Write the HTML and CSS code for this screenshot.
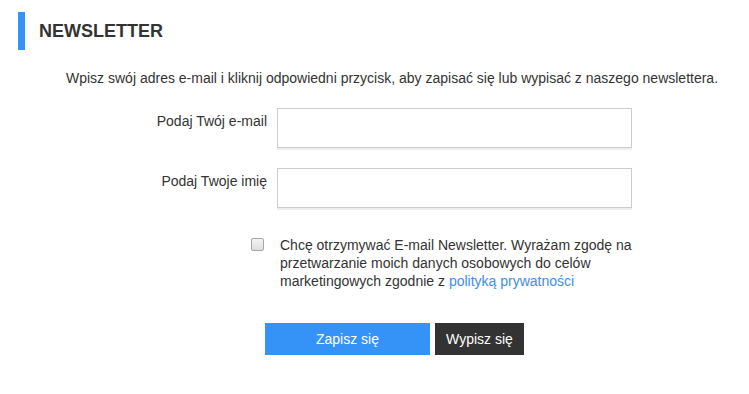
FILE: index.html
```html
<!DOCTYPE html>
<html lang="pl">
<head>
    <meta charset="UTF-8">
    <meta name="viewport" content="width=device-width, initial-scale=1.0">
    <title>Newsletter</title>
    <link rel="stylesheet" href="styles.css">
</head>
<body>

    <div class="newsletter">
        <h2 class="title">NEWSLETTER</h2>
        <p class="intro">Wpisz swój adres e-mail i kliknij odpowiedni przycisk, aby zapisać się lub wypisać z naszego newslettera.</p>
        <form id="newsletterForm">
            <div class="form-row">
                <label for="email">Podaj Twój e-mail</label>
                <input type="email" id="email" name="email">
            </div>
            <div class="form-row">
                <label for="name">Podaj Twoje imię</label>
                <input type="text" id="name" name="name">
            </div>
            <div class="consent">
                <input type="checkbox" id="agree" name="agree">
                <label for="agree">Chcę otrzymywać E-mail Newsletter. Wyrażam zgodę na przetwarzanie moich danych osobowych do celów marketingowych zgodnie z <a href="#">polityką prywatności</a></label>
            </div>
            <div class="actions">
                <button type="submit" class="btn-subscribe">Zapisz się</button>
                <button type="button" class="btn-unsubscribe">Wypisz się</button>
            </div>
        </form>
    </div>

</body>
</html>
```

FILE: styles.css
```css
body {
    font-family: "Liberation Sans", Arial, sans-serif;
    font-size: 14px;
    color: #333;
    background: #fff;
    margin: 0;
}
.newsletter {
    padding-top: 12px;
}
.title {
    margin: 0 0 0 18px;
    height: 38px;
    border-left: 7px solid #3592f7;
    padding-left: 14px;
    display: flex;
    align-items: center;
    font-size: 18px;
    font-weight: bold;
    color: #333;
}
.intro {
    margin: 18px 0 0 66px;
    line-height: 20px;
}
.form-row {
    display: flex;
    margin: 20px 0 0 140px;
}
.form-row label {
    width: 127px;
    text-align: right;
    padding-top: 3px;
    line-height: 20px;
}
.form-row input {
    width: 355px;
    height: 40px;
    margin: 0 0 0 10px;
    padding: 0 10px;
    box-sizing: border-box;
    border: 1px solid #ccc;
    box-shadow: 0 2px 0 #eee;
    font-family: inherit;
    font-size: 14px;
}
.form-row + .form-row {
    margin-top: 20px;
}
.consent {
    display: flex;
    margin: 28px 0 0 251px;
    line-height: 18px;
}
.consent input {
    appearance: none;
    width: 13px;
    height: 13px;
    margin: 2px 0 0 0;
    flex-shrink: 0;
    border: 1px solid #a6a6a6;
    border-radius: 2px;
    background: linear-gradient(#f4f4f4, #dedede);
}
.consent input:checked {
    background: #3592f7;
    border-color: #3592f7;
}
.consent label {
    width: 352px;
    margin-left: 16px;
}
.consent a {
    color: #3d8fe8;
    text-decoration: none;
}
.actions {
    display: flex;
    gap: 5px;
    margin: 33px 0 0 265px;
}
.actions button {
    height: 32px;
    border: none;
    color: #fff;
    font-family: inherit;
    font-size: 14px;
    cursor: pointer;
}
.btn-subscribe {
    width: 165px;
    background: #3592f7;
}
.btn-unsubscribe {
    width: 89px;
    background: #333;
}
```
